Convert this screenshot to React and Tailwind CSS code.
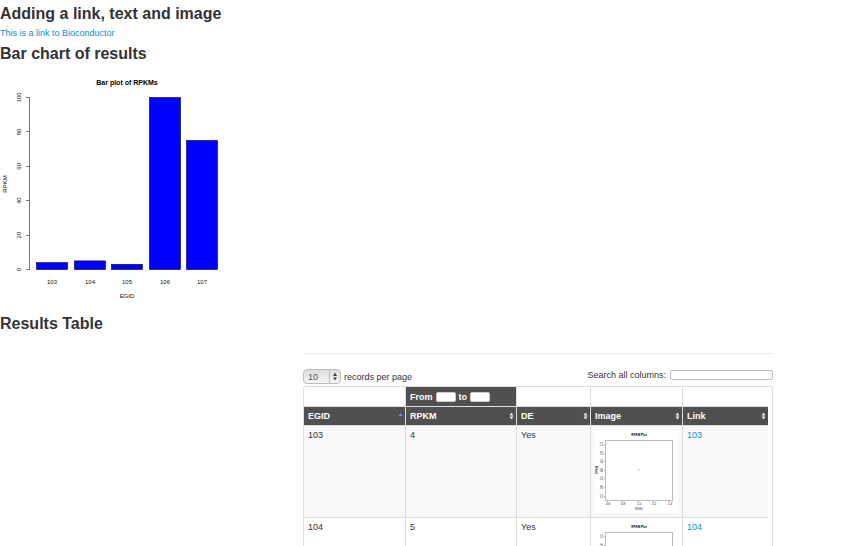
import React from "react";

const FONT = "font-['Liberation_Sans',Arial,sans-serif]";

const bars = [
  { id: "103", value: 4, x: 36 },
  { id: "104", value: 5, x: 74 },
  { id: "105", value: 3, x: 111 },
  { id: "106", value: 100, x: 149 },
  { id: "107", value: 75, x: 186 },
];

const yTicks = [0, 20, 40, 60, 80, 100];
const yFor = (v) => 201.5 - v * 1.72;

function BarPlot() {
  return (
    <svg width="240" height="240" viewBox="0 0 240 240" role="img" aria-label="Bar plot of RPKMs" className="block" fontFamily="Liberation Sans, Arial, sans-serif">
      <text x="127" y="17" fontSize="7" fontWeight="700" textAnchor="middle">Bar plot of RPKMs</text>
      <g stroke="#777" strokeWidth="1">
        <path d="M29.5 29.5V201.5" fill="none" />
        {yTicks.map((t) => (
          <path key={t} d={`M26 ${Math.floor(yFor(t)) + 0.5}H30`} />
        ))}
      </g>
      {yTicks.map((t) => (
        <text key={t} transform={`translate(21 ${yFor(t)}) rotate(-90)`} fontSize="6" textAnchor="middle" fill="#111">{t}</text>
      ))}
      <text transform="translate(7 116) rotate(-90)" fontSize="6" textAnchor="middle" fill="#111">RPKM</text>
      {bars.map((b) => (
        <g key={b.id}>
          <rect x={b.x + 0.5} y={yFor(b.value)} width="31" height={b.value * 1.72} fill="#0000ff" stroke="#000033" strokeWidth="0.6" />
          <text x={b.x + 16} y="216" fontSize="6" textAnchor="middle" fill="#111">{b.id}</text>
        </g>
      ))}
      <text x="127" y="230" fontSize="6" textAnchor="middle" fill="#111">EGID</text>
    </svg>
  );
}

function MiniPlot() {
  const ys = [14, 23, 31, 40, 48, 57, 66];
  const xs = [13, 28, 44, 59, 75];
  return (
    <svg width="83" height="83" viewBox="0 0 83 83" className="block bg-white" role="img" aria-label="RPKM Plot" fontFamily="Liberation Sans, Arial, sans-serif">
      <text x="44" y="6" fontSize="3" fontWeight="700" textAnchor="middle">RPKM Plot</text>
      <rect x="10.5" y="10.5" width="67" height="60" fill="none" stroke="#bbb" />
      {ys.map((y, i) => (
        <g key={y}>
          <path d={`M9 ${y + 0.5}H10`} stroke="#aaa" />
          <text transform={`translate(8 ${y}) rotate(-90)`} fontSize="3" textAnchor="middle" fill="#111">{["2.5", "3.0", "3.5", "4.0", "4.5", "5.0", "5.5"][6 - i]}</text>
        </g>
      ))}
      {xs.map((x, i) => (
        <g key={x}>
          <path d={`M${x - 0.5} 71V72`} stroke="#aaa" />
          <text x={x} y="75" fontSize="3" textAnchor="middle" fill="#111">{["0.6", "0.8", "1.0", "1.2", "1.4"][i]}</text>
        </g>
      ))}
      <text transform="translate(3 40) rotate(-90)" fontSize="3" textAnchor="middle">RPKM</text>
      <text x="44" y="80" fontSize="3" textAnchor="middle" fill="#111">EGID</text>
      <rect x="43" y="39.5" width="2" height="1" fill="#b5b5f5" />
    </svg>
  );
}

function SortIcon({ active }) {
  return active ? (
    <svg width="5" height="8" viewBox="0 0 5 8" aria-hidden="true"><path d="M2.5 1 4.5 4H.5Z" fill="#8080ff" /></svg>
  ) : (
    <svg width="5" height="8" viewBox="0 0 5 8" aria-hidden="true"><path d="M2.5 .5 4.5 3.5H.5ZM2.5 7.5 4.5 4.5H.5Z" fill="#eee" /></svg>
  );
}

const columns = ["EGID", "RPKM", "DE", "Image", "Link"];
const rows = [
  { id: "103", rpkm: 4, de: "Yes" },
  { id: "104", rpkm: 5, de: "Yes" },
];

const blank = "border-l border-[#ddd] first:border-l-0";
const cell = "h-[92px] border-t border-l border-[#ddd] px-1 pt-1 align-top leading-[10px] first:border-l-0";

export default function App() {
  return (
    <main className={`${FONT} h-screen overflow-hidden bg-white text-[9px] leading-[12px] text-[#333]`}>
      <h1 className="pt-1 text-[16px] leading-[20px] font-bold">Adding a link, text and image</h1>
      <p className="pt-1 pb-[2px] leading-[10px]">
        <a href="#bioconductor" className="text-[#0a8fd0]">This is a link to Bioconductor</a>
      </p>
      <h1 className="pt-1 text-[16px] leading-[20px] font-bold">Bar chart of results</h1>
      <div className="pt-1">
        <BarPlot />
      </div>
      <h1 className="pt-1 text-[16px] leading-[24px] font-bold">Results Table</h1>

      <section className="mt-[17px] mr-[92px] ml-[303px] border-t border-[#eee] pt-[15px]">
        <div className="flex items-start justify-between">
          <label className="flex items-center gap-[3px] leading-[10px]">
            <span className="relative flex">
              <select className="h-[15px] w-[38px] appearance-none rounded-[4px] border border-[#bbb] bg-linear-to-b from-[#ddd] to-[#f6f6f6] pl-1 text-[9px] leading-[12px] text-[#555]" defaultValue="10">
                <option>10</option>
                <option>25</option>
              </select>
              <svg className="pointer-events-none absolute top-0 right-0" width="12" height="15" viewBox="0 0 12 15" aria-hidden="true">
                <path d="M.5 1V14" stroke="#bbb" />
                <path d="M6 3.5 8 7H4ZM6 11.5 8 8.5H4Z" fill="#444" />
              </svg>
            </span>
            records per page
          </label>
          <label className="flex items-center gap-1">
            Search all columns:
            <input type="text" className="h-[10px] w-[103px] rounded-[2px] border border-[#bbb] bg-white px-1 text-[9px]" />
          </label>
        </div>

        <div className="mt-[2px] rounded-[2px] border border-[#ddd] pr-1">
          <table className="w-full table-fixed border-separate border-spacing-0 text-left">
            <colgroup>
              <col className="w-[101px]" />
              <col className="w-[111px]" />
              <col className="w-[74px]" />
              <col className="w-[92px]" />
              <col />
            </colgroup>
            <thead>
              <tr className="h-[19px]">
                <td className={blank} />
                <th className="border-l border-[#ddd] bg-[#505050] p-0 pl-1 font-bold text-white">
                  <div className="flex h-[19px] items-center gap-[3px] leading-[10px]">
                    <label htmlFor="from">From</label>
                    <input id="from" type="text" className="h-[10px] w-5 rounded-[2px] border border-[#ccc] bg-white text-[9px] text-[#555]" />
                    <label htmlFor="to">to</label>
                    <input id="to" type="text" className="h-[10px] w-5 rounded-[2px] border border-[#ccc] bg-white text-[9px] text-[#555]" />
                  </div>
                </th>
                <td className={blank} />
                <td className={blank} />
                <td className={blank} />
              </tr>
              <tr>
                {columns.map((c, i) => (
                  <th key={c} scope="col" className="border-t border-l border-[#ddd] bg-[#505050] p-0 pr-[2px] pl-1 font-bold text-white first:border-l-0">
                    <div className="flex h-[18px] items-center justify-between">
                      {c}
                      <SortIcon active={i === 0} />
                    </div>
                  </th>
                ))}
              </tr>
            </thead>
            <tbody>
              {rows.map((r, i) => (
                <tr key={r.id} className={i % 2 === 0 ? "bg-[#f9f9f9]" : "bg-white"}>
                  <td className={cell}>{r.id}</td>
                  <td className={cell}>{r.rpkm}</td>
                  <td className={cell}>{r.de}</td>
                  <td className={cell}><MiniPlot /></td>
                  <td className={cell}><a href={`#gene-${r.id}`} className="text-[#0a8fd0]">{r.id}</a></td>
                </tr>
              ))}
            </tbody>
          </table>
        </div>
      </section>
    </main>
  );
}
